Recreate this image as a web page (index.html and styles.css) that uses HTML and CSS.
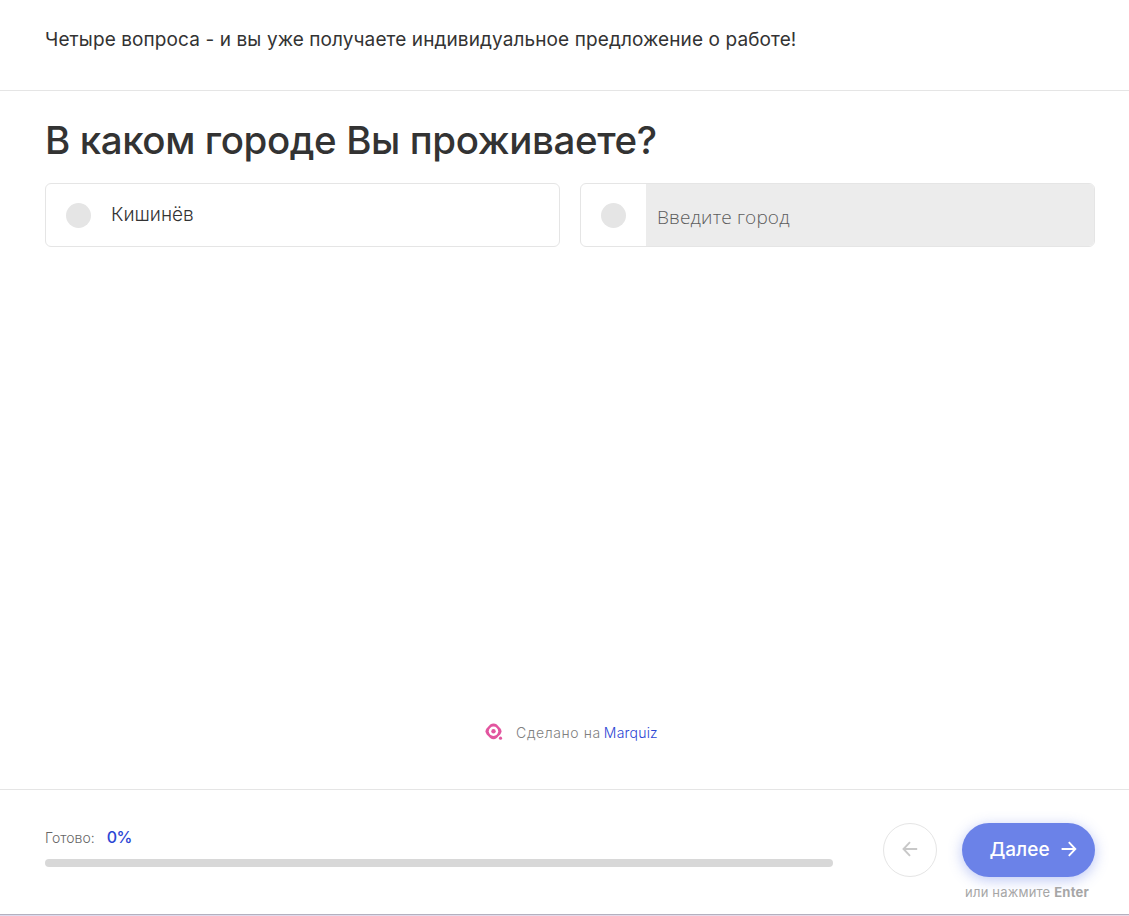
FILE: index.html
```html
<!DOCTYPE html>
<html lang="ru">
<head>
    <meta charset="UTF-8">
    <meta name="viewport" content="width=device-width, initial-scale=1.0">
    <title>Marquiz</title>
    <link rel="stylesheet" href="styles.css">
</head>
<body>
    <div class="quiz">
        <header class="quiz-header">
            <span class="quiz-title">Четыре вопроса - и вы уже получаете индивидуальное предложение о работе!</span>
        </header>

        <main class="quiz-body">
            <h1 class="question">В каком городе Вы проживаете?</h1>

            <div class="answers">
                <label class="answer">
                    <span class="radio"></span>
                    <span class="answer-text">Кишинёв</span>
                </label>
                <label class="answer answer-custom">
                    <span class="radio"></span>
                    <input type="text" class="answer-input" placeholder="Введите город">
                </label>
            </div>

            <div class="made-by">
                <svg class="made-by-logo" width="18" height="18" viewBox="0 0 18 18">
                    <path d="M5.2 1.6Q8.5 -.8 11.8 1.6L15.2 5.2Q17.8 8.3 15.2 11.4L11.8 15Q8.5 17.4 5.2 15L1.8 11.4Q-.8 8.3 1.8 5.2Z" fill="#e2559f"/>
                    <circle cx="8.5" cy="8.3" r="4.7" fill="#fff"/>
                    <circle cx="8.5" cy="8.3" r="2.2" fill="#e2559f"/>
                    <circle cx="15.5" cy="15.2" r="2.5" fill="#fff"/>
                    <circle cx="15.5" cy="15.2" r="1.6" fill="#e2559f"/>
                </svg>
                <span class="made-by-text">Сделано на</span>
                <a class="made-by-link">Marquiz</a>
            </div>
        </main>

        <footer class="quiz-footer">
            <div class="progress">
                <div class="progress-label">
                    <span class="progress-text">Готово:</span>
                    <span class="progress-value">0%</span>
                </div>
                <div class="progress-bar"></div>
            </div>

            <button class="btn btn-back">
                <svg width="16" height="16" viewBox="0 0 16 16" fill="none" stroke="#c8c8c8" stroke-width="1.9">
                    <path d="M15.2 8H1.8M8 1.2L1.5 8L8 14.8"/>
                </svg>
            </button>

            <div class="next">
                <button class="btn btn-next">
                    <span class="btn-text">Далее</span>
                    <svg width="16" height="16" viewBox="0 0 16 16" fill="none" stroke="#fff" stroke-width="1.9">
                        <path d="M.6 8H14M7.8 1.2L14.3 8L7.8 14.8"/>
                    </svg>
                </button>
                <div class="next-hint">или нажмите <b>Enter</b></div>
            </div>
        </footer>
    </div>
</body>
</html>
```
FILE: styles.css
```css
* {
    box-sizing: border-box;
}

body {
    margin: 0;
    height: 916px;
    overflow: hidden;
    font-family: 'Inter', 'Open Sans', sans-serif;
    color: #333333;
    background: linear-gradient(90deg, #dcdaee, #ead9e6);
}

.quiz {
    display: flex;
    flex-direction: column;
    height: 915px;
    background-color: #ffffff;
    border-bottom: 1px solid #b4b0bf;
}

.quiz-header {
    height: 91px;
    padding: 28px 45px 0;
    border-bottom: 1px solid #e5e5e5;
}

.quiz-title {
    display: block;
    font-size: 19px;
    line-height: 24px;
    letter-spacing: 0.1px;
    white-space: nowrap;
}

.quiz-body {
    flex: 1;
    display: flex;
    flex-direction: column;
    padding: 24px 34px 46px 45px;
}

.question {
    margin: 0 0 18px;
    font-size: 38.5px;
    font-weight: 500;
    line-height: 50px;
    letter-spacing: -0.4px;
    white-space: nowrap;
}

.answers {
    display: grid;
    grid-template-columns: 1fr 1fr;
    gap: 20px;
}

.answer {
    display: flex;
    align-items: center;
    height: 64px;
    padding-left: 20px;
    border: 1px solid #e5e5e5;
    border-radius: 6px;
    overflow: hidden;
}

.radio {
    flex-shrink: 0;
    width: 25px;
    height: 25px;
    margin-right: 20px;
    border-radius: 50%;
    background-color: #e5e5e5;
}

.answer-text {
    font-size: 19px;
    font-weight: 300;
    line-height: 24px;
}

.answer-input {
    flex: 1;
    height: 100%;
    padding: 3px 12px 0 11px;
    border: none;
    outline: none;
    background-color: #ececec;
    font-family: 'Open Sans', sans-serif;
    font-size: 19px;
    font-weight: 300;
    letter-spacing: 0.15px;
}

.answer-input::placeholder {
    color: #5c5c5c;
}

.made-by {
    display: flex;
    align-items: center;
    justify-content: center;
    margin-top: auto;
    padding-left: 3px;
    font-size: 14px;
    font-weight: 300;
    line-height: 20px;
    color: #808080;
}

.made-by-logo {
    margin-right: 13px;
    margin-bottom: 2px;
}

.made-by-text {
    margin-right: 3px;
    letter-spacing: 0.6px;
}

.made-by-link {
    color: #2c46d4;
    letter-spacing: 0.2px;
}

.quiz-footer {
    display: flex;
    align-items: flex-start;
    height: 125px;
    padding: 33px 34px 0 45px;
    border-top: 1px solid #e5e5e5;
}

.progress {
    width: 788px;
    margin-right: 50px;
    padding-top: 3px;
}

.progress-label {
    display: flex;
    align-items: baseline;
    gap: 12px;
    height: 33px;
    line-height: 22px;
}

.progress-text {
    font-size: 14px;
    font-weight: 300;
    color: #666666;
}

.progress-value {
    font-size: 16px;
    font-weight: 500;
    letter-spacing: -0.4px;
    color: #2c46d4;
}

.progress-bar {
    height: 8px;
    border-radius: 4px;
    background-color: #d8d8d8;
}

.btn {
    display: flex;
    align-items: center;
    justify-content: center;
    height: 54px;
    padding: 0;
    border: none;
    border-radius: 27px;
    font-family: inherit;
    cursor: pointer;
}

.btn-back {
    width: 54px;
    margin-right: 25px;
    padding-bottom: 2px;
    border: 1px solid #e5e5e5;
    background-color: #ffffff;
}

.next {
    width: 133px;
}

.btn-next {
    width: 133px;
    gap: 11px;
    padding-left: 9px;
    padding-bottom: 2px;
    background-color: #6b82e8;
    box-shadow: 0 3px 14px rgba(107, 130, 232, 0.45);
    color: #ffffff;
}

.btn-text {
    padding-top: 1px;
    font-size: 19px;
    font-weight: 500;
    line-height: 24px;
}

.next-hint {
    margin-top: 6px;
    padding-right: 3px;
    text-align: center;
    white-space: nowrap;
    font-size: 13px;
    line-height: 18px;
    letter-spacing: 0.2px;
    color: #a6a6a6;
}
```
